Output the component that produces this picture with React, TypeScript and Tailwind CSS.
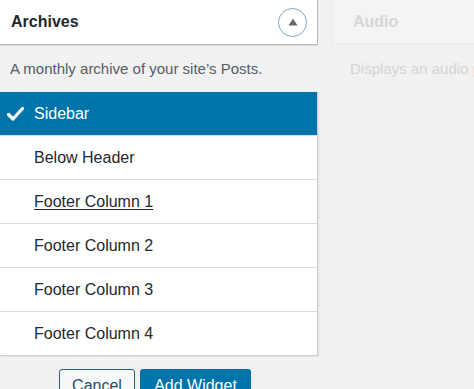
import React from "react";

const areas = ["Sidebar", "Below Header", "Footer Column 1", "Footer Column 2", "Footer Column 3", "Footer Column 4"];

const App = () => {
  return (
    <div className="w-[474px] h-[389px] overflow-hidden bg-[#f1f1f1] flex items-start font-['Liberation_Sans',sans-serif]">
      {/* chosen widget */}
      <div className="w-[318px] shrink-0 flex flex-col">
        <div className="h-[45px] shrink-0 bg-white border-r border-b border-[#b4b9be] shadow-[0_1px_1px_rgba(0,0,0,0.08)] flex items-center justify-between pl-[11px] pr-[10px]">
          <span className="text-[16px] font-bold text-[#23282d]">Archives</span>
          <button className="w-[29px] h-[29px] rounded-full border-[1.5px] border-[#7aa7c7] flex items-center justify-center">
            <svg width="10" height="8" viewBox="0 0 10 8">
              <path d="M5 0.5L9.5 7.5H0.5Z" fill="#6b6b6b" />
            </svg>
          </button>
        </div>
        <p className="mt-[14px] pl-[10px] text-[15px] leading-[20px] text-[#555d66]">A monthly archive of your site’s Posts.</p>
        <ul className="mt-[13px] shrink-0 bg-white border-r border-b border-[#ccd0d4] shadow-[1px_1px_1px_rgba(0,0,0,0.06)]">
          {areas.map((name, i) => (
            <li
              key={name}
              className={
                i === 0
                  ? "h-[43px] flex items-center bg-[#0073aa] text-white text-[16px]"
                  : "h-[44px] flex items-center border-t border-[#dcdcde] text-[16px] text-[#23282d]"
              }
            >
              <span className="w-[34px] flex justify-center pr-[3px]">
                {i === 0 && (
                  <svg width="17" height="14" viewBox="0 0 17 14">
                    <path d="M1.5 7.5L6 12L15.5 1.5" fill="none" stroke="white" strokeWidth="3.2" strokeLinecap="round" strokeLinejoin="round" />
                  </svg>
                )}
              </span>
              <span className={i === 2 ? "underline underline-offset-2" : ""}>{name}</span>
            </li>
          ))}
        </ul>
        <div className="mt-[13px] shrink-0 flex gap-[5px] pl-[59px]">
          <button className="w-[76px] h-[34px] rounded-[3px] border border-[#2c5d7c] bg-[#f6f7f7] text-[16px] text-[#1d4e6e]">Cancel</button>
          <button className="w-[111px] h-[34px] rounded-[3px] bg-[#0073aa] text-[16px] text-white">Add Widget</button>
        </div>
      </div>

      {/* next widget, dimmed */}
      <div className="ml-[14px] flex-1 min-w-0 flex flex-col">
        <div className="h-[44px] shrink-0 bg-[#f4f4f4] border-l border-b border-[#e8e8e8] flex items-center pl-[20px]">
          <span className="text-[16px] font-bold text-[#d6d6d6]">Audio</span>
        </div>
        <p className="mt-[15px] pl-[18px] text-[15px] leading-[20px] text-[#d4d4d4] whitespace-nowrap">Displays an audio player.</p>
      </div>
    </div>
  );
};

export default App;
